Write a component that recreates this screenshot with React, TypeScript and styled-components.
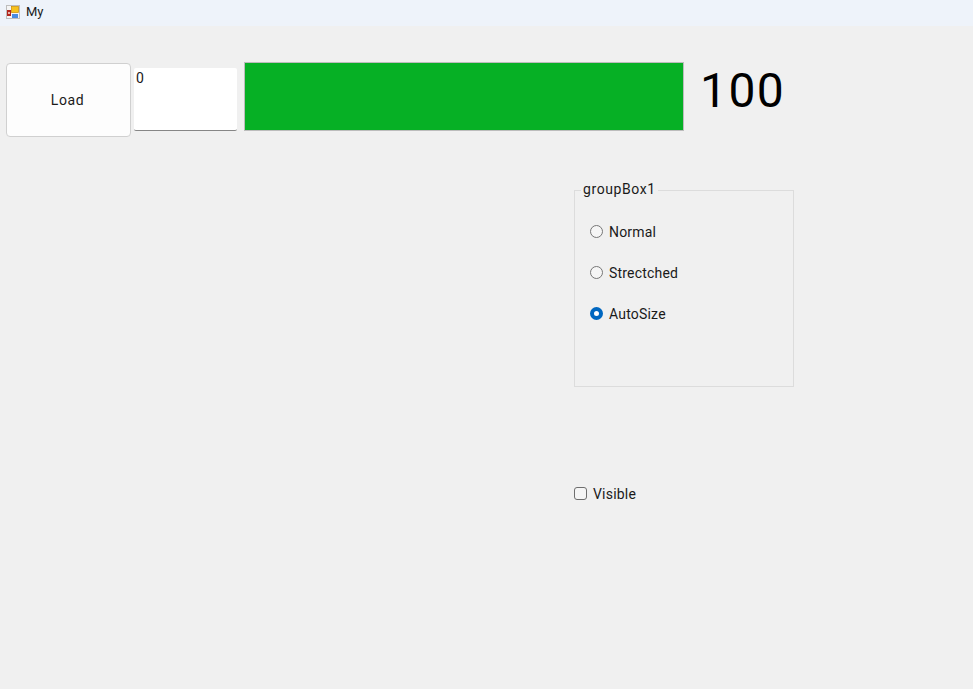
import React from "react";
import styled, { createGlobalStyle } from "styled-components";

const GlobalStyle = createGlobalStyle`
  html, body {
    margin: 0;
    padding: 0;
    height: 100%;
    background: #f0f0f0;
    font-family: Roboto, "Noto Sans", sans-serif;
    color: #000;
  }
`;

const Window = styled.div`
  width: 973px;
  height: 689px;
  overflow: hidden;
  background: #f0f0f0;
`;

const TitleBar = styled.header`
  height: 26px;
  display: flex;
  align-items: center;
  gap: 4px;
  padding: 0 0 3px 6px;
  box-sizing: border-box;
  background: #eef3fa;
  font-size: 13px;
  color: #1a1a1a;
`;

const TopRow = styled.div`
  display: flex;
  align-items: flex-start;
  margin-top: 36px;
  padding-left: 6px;
`;

const LoadButton = styled.button`
  width: 125px;
  height: 74px;
  margin-top: 1px;
  background: #fdfdfd;
  border: 1px solid #d0d0d0;
  border-radius: 4px;
  font: inherit;
  font-size: 14px;
  letter-spacing: 0.6px;
  color: #1a1a1a;
  padding: 0 2px 0 0;
`;

const TextBox = styled.div`
  width: 103px;
  height: 63px;
  margin: 6px 1px 0 3px;
  box-sizing: border-box;
  padding: 1px 2px 0;
  background: #fff;
  border-bottom: 1px solid #868686;
  border-radius: 2px;
  font-size: 14px;
  line-height: 18px;
  color: #1a1a1a;
`;

const ProgressTrack = styled.div`
  width: 440px;
  height: 69px;
  margin-left: 6px;
  box-sizing: border-box;
  border: 1px solid #bcbcbc;
  background: #e6e6e6;
`;

const ProgressFill = styled.div`
  height: 100%;
  background: #06b025;
`;

const Percent = styled.div`
  margin-left: 16px;
  font-size: 48px;
  line-height: 58px;
  letter-spacing: 1.4px;
`;

const Controls = styled.div`
  margin: 44px 0 0 574px;
  width: 220px;
`;

const GroupBox = styled.fieldset`
  margin: 0;
  height: 206px;
  box-sizing: border-box;
  padding: 22px 0 0 15px;
  border: 1px solid #dcdcdc;
  display: flex;
  flex-direction: column;
  gap: 21px;
  legend {
    margin: 0 0 0 -9px;
    padding: 0 2px 2px;
    font-size: 14px;
    line-height: 16px;
    letter-spacing: 0.6px;
    color: #1a1a1a;
  }
`;

const OptionRow = styled.label`
  display: flex;
  align-items: center;
  gap: 6px;
  height: 20px;
  font-size: 14px;
  letter-spacing: 0.2px;
  color: #1a1a1a;
`;

const OptionText = styled.span`
  padding-top: 2px;
`;

const RadioMark = styled.span<{ $checked?: boolean }>`
  width: 13px;
  height: 13px;
  box-sizing: border-box;
  border-radius: 50%;
  background: ${(p) => (p.$checked ? "#fff" : "#f5f5f5")};
  border: ${(p) => (p.$checked ? "4px solid #0067c0" : "1px solid #767676")};
`;

const VisibleRow = styled(OptionRow)`
  margin-top: 96px;
`;

const CheckMark = styled.span`
  width: 13px;
  height: 13px;
  box-sizing: border-box;
  border-radius: 3px;
  background: #f5f5f5;
  border: 1px solid #6e6e6e;
`;

function AppIcon() {
  return (
    <svg width="16" height="16" viewBox="0 0 16 16">
      <rect x="0.5" y="1.5" width="13" height="13" fill="#f4f4f4" stroke="#bdbdbd" />
      <rect x="1" y="6" width="4" height="6" fill="#b3261e" />
      <rect x="2" y="8" width="2" height="2" fill="#e8b0a8" />
      <rect x="5.5" y="2.5" width="7" height="6" fill="#f7c21c" stroke="#c98c00" strokeWidth="0.7" />
      <rect x="6" y="10" width="6" height="4" fill="#4a8be0" />
    </svg>
  );
}

export default function App() {
  return (
    <Window>
      <GlobalStyle />
      <TitleBar>
        <AppIcon />
        <span>My</span>
      </TitleBar>
      <TopRow>
        <LoadButton>Load</LoadButton>
        <TextBox>0</TextBox>
        <ProgressTrack>
          <ProgressFill style={{ width: "100%" }} />
        </ProgressTrack>
        <Percent>100</Percent>
      </TopRow>
      <Controls>
        <GroupBox>
          <legend>groupBox1</legend>
          <OptionRow>
            <RadioMark />
            <OptionText>Normal</OptionText>
          </OptionRow>
          <OptionRow>
            <RadioMark />
            <OptionText>Strectched</OptionText>
          </OptionRow>
          <OptionRow>
            <RadioMark $checked />
            <OptionText>AutoSize</OptionText>
          </OptionRow>
        </GroupBox>
        <VisibleRow>
          <CheckMark />
          <OptionText>Visible</OptionText>
        </VisibleRow>
      </Controls>
    </Window>
  );
}
